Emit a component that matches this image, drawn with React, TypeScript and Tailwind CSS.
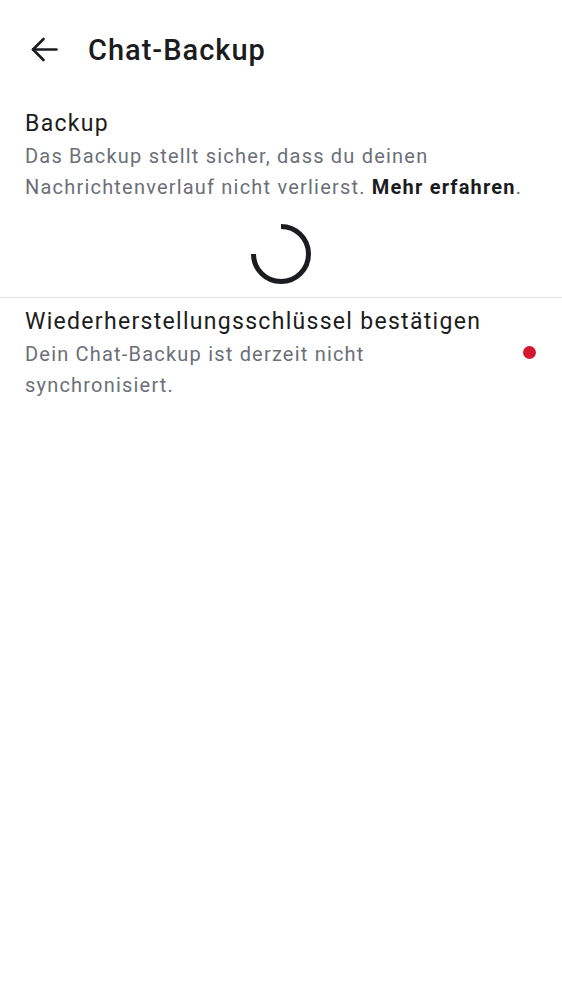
import React from "react";

export default function App() {
  return (
    <div className="w-[562px] h-[1000px] bg-white text-[#1b1c20]" style={{ fontFamily: "Roboto, sans-serif" }}>
      <header className="h-[100px] flex items-center">
        <div className="w-[88px] flex items-center pl-[30px]">
          <svg width="28" height="28" viewBox="0 0 28 28" fill="none" stroke="#1b1c20" strokeWidth="2.6" strokeLinecap="round" strokeLinejoin="round">
            <path d="M26.5 13.5H3" />
            <path d="M13.5 3L3 13.5L13.5 24" />
          </svg>
        </div>
        <h1 className="text-[29px] leading-none font-medium tracking-[1px]">Chat-Backup</h1>
      </header>
      <section className="px-[25px]">
        <div className="text-[23px] leading-[30px] mt-[9px] tracking-[1.3px]">Backup</div>
        <p className="text-[20px] leading-[31px] mt-[2px] text-[#6b6f78] tracking-[1.2px]">
          Das Backup stellt sicher, dass du deinen Nachrichtenverlauf nicht verlierst.{" "}
          <span className="font-bold text-[#1b1c20]">Mehr erfahren</span>.
        </p>
      </section>
      <div className="flex justify-center pt-[19px] pb-[11px]">
        <svg width="64" height="64" viewBox="0 0 64 64" fill="none">
          <path d="M32 4.5A27.5 27.5 0 1 1 4.5 32" stroke="#1b1c20" strokeWidth="5" />
        </svg>
      </div>
      <div className="h-px bg-[#e2e2e6]" />
      <section className="pl-[25px] pr-[26px] pt-[9px] flex items-center">
        <div className="flex-1">
          <div className="text-[23px] leading-[30px] tracking-[1.3px]">Wiederherstellungsschlüssel bestätigen</div>
          <p className="text-[20px] leading-[31px] mt-[2px] text-[#6b6f78] tracking-[1.2px] w-[420px]">
            Dein Chat-Backup ist derzeit nicht synchronisiert.
          </p>
        </div>
        <div className="w-[13px] h-[13px] rounded-full bg-[#d3172e] -mt-[3px]" />
      </section>
    </div>
  );
}
